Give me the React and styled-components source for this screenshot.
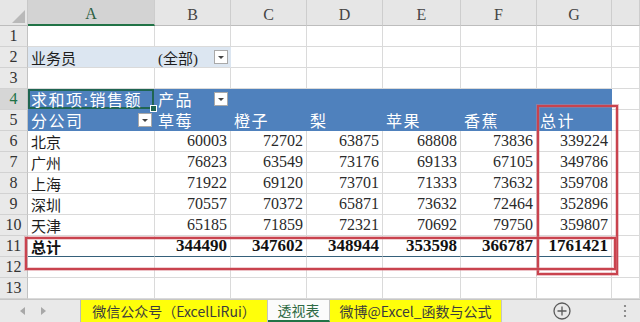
import React from 'react'
import styled, { createGlobalStyle, css } from 'styled-components'

const Global = createGlobalStyle`
  html, body { margin: 0; padding: 0; background: #fff; }
  body { width: 640px; height: 322px; overflow: hidden; }
`

const BLUE = '#4f81bd'
const GRID = '#dadada'

const Page = styled.div`
  width: 640px;
  height: 322px;
  display: flex;
  flex-direction: column;
  font-family: "Liberation Serif", "Noto Sans CJK SC", serif;
`

const Sheet = styled.div`
  position: relative;
  display: grid;
  grid-template-columns: 28px 127px 76px 76px 76px 78px 76px 75px 28px;
  grid-template-rows: 26px repeat(13, 21px);
`

const Corner = styled.div`
  background: #e6e6e6;
  border-right: 1px solid #c8c8c8;
  border-bottom: 1px solid #bdbdbd;
  box-sizing: border-box;
  display: flex;
  align-items: flex-end;
  justify-content: flex-end;
  padding: 0 2px 2px 0;
`

const ColHead = styled.div`
  box-sizing: border-box;
  background: ${p => (p.$active ? '#d3d3d3' : '#e6e6e6')};
  border-right: 1px solid #cdcdcd;
  border-bottom: ${p => (p.$active ? '2px solid #217346' : '1px solid #bdbdbd')};
  color: ${p => (p.$active ? '#2c5e3f' : '#444')};
  font-size: 16px;
  display: flex;
  align-items: center;
  justify-content: center;
  padding-top: 4px;
`

const RowHead = styled.div`
  box-sizing: border-box;
  background: ${p => (p.$active ? '#d6d6d6' : '#e9e9e9')};
  border-right: 1px solid #c2c2c2;
  border-bottom: 1px solid #d2d2d2;
  color: ${p => (p.$active ? '#217346' : '#333')};
  font-size: 16px;
  display: flex;
  align-items: center;
  justify-content: center;
`

const Cell = styled.div`
  position: relative;
  box-sizing: border-box;
  border-right: 1px solid ${GRID};
  border-bottom: 1px solid ${GRID};
  background: #fff;
  color: #1e1e1e;
  font-size: 15px;
  display: flex;
  align-items: center;
  justify-content: ${p => (p.$num ? 'flex-end' : 'space-between')};
  padding: 0 3px;
  white-space: nowrap;
  overflow: visible;

  ${p => p.$num && css`
    font-size: 16px;
    color: #2a2a2a;
  `}

  ${p => p.$fill === 'light' && css`
    background: #dce6f1;
    border-right-color: #dce6f1;
  `}

  ${p => p.$fill === 'blue' && css`
    background: ${BLUE};
    border-color: ${BLUE};
    color: #fff;
    font-size: 16px;
    letter-spacing: 1.5px;
  `}

  ${p => p.$bold && css`
    font-weight: bold;
    font-size: ${p.$num ? '17px' : '15px'};
    color: #111;
    border-bottom: 1px solid #35607a;
  `}

  ${p => p.$selected && css`
    box-shadow: inset 0 0 0 2px #1f6552;
    &::after {
      content: '';
      position: absolute;
      right: -3px;
      bottom: -3px;
      width: 5px;
      height: 5px;
      background: #1f6552;
      border: 1px solid #fff;
      z-index: 2;
    }
  `}
`

const DropBtn = styled.span`
  flex: none;
  width: 14px;
  height: 14px;
  box-sizing: border-box;
  background: #fff;
  border: 1px solid #a9a9a9;
  margin-right: -1px;
  display: flex;
  align-items: center;
  justify-content: center;

  &::before {
    content: '';
    border-left: 3px solid transparent;
    border-right: 3px solid transparent;
    border-top: 3px solid #444;
  }
`

const Mark = styled.div`
  position: absolute;
  left: ${p => p.$x}px;
  top: ${p => p.$y}px;
  width: ${p => p.$w}px;
  height: ${p => p.$h}px;
  box-sizing: border-box;
  border: 2px solid #c9434e;
  box-shadow: 0 0 0 1px rgba(214, 120, 130, 0.45), inset 0 0 0 1px rgba(214, 120, 130, 0.35);
  pointer-events: none;
  z-index: 3;
`

const TabBar = styled.div`
  flex: 1;
  display: flex;
  align-items: stretch;
  background: #e9e9e9;
  border-top: 1px solid #c6c6c6;
  font-family: "Noto Sans CJK SC", "Liberation Sans", sans-serif;
  font-size: 14px;
`

const Nav = styled.div`
  width: 81px;
  display: flex;
  align-items: center;
  gap: 16px;
  padding-left: 20px;
  box-sizing: border-box;
  border-right: 1px solid #b9b9b9;
`

const Tab = styled.div`
  display: flex;
  align-items: center;
  justify-content: center;
  width: ${p => p.$w}px;
  box-sizing: border-box;
  white-space: nowrap;
  color: ${p => (p.$active ? '#2e6a44' : '#3c3c3c')};
  background: ${p => (p.$active ? '#fbfbfb' : '#ffff0a')};
  border-right: 1px solid #c4c4c4;
  ${p => p.$active && css`
    border-bottom: 2px solid #217346;
  `}
`

const AddWrap = styled.div`
  width: 70px;
  display: flex;
  align-items: center;
  justify-content: flex-end;
  padding-right: 1px;
  box-sizing: border-box;
`

const More = styled.div`
  margin-left: auto;
  width: 30px;
  display: flex;
  align-items: center;
  justify-content: center;
`

const cols = ['A', 'B', 'C', 'D', 'E', 'F', 'G', '']

const rows = [
  ['北京', 60003, 72702, 63875, 68808, 73836, 339224],
  ['广州', 76823, 63549, 73176, 69133, 67105, 349786],
  ['上海', 71922, 69120, 73701, 71333, 73632, 359708],
  ['深圳', 70557, 70372, 65871, 73632, 72464, 352896],
  ['天津', 65185, 71859, 72321, 70692, 79750, 359807],
]
const total = ['总计', 344490, 347602, 348944, 353598, 366787, 1761421]
const fruits = ['草莓', '橙子', '梨', '苹果', '香蕉', '总计']

const Blank = ({ n }) => Array.from({ length: n }, (_, i) => <Cell key={i} />)

const Arrow = ({ dir }) => (
  <svg width="5" height="8" viewBox="0 0 5 8">
    <polygon points={dir === 'l' ? '5,0 5,8 0,4' : '0,0 0,8 5,4'} fill="#a8a8a8" />
  </svg>
)

export default function App() {
  return (
    <Page>
      <Global />
      <Sheet>
        <Corner>
          <svg width="13" height="13" viewBox="0 0 13 13">
            <polygon points="13,0 13,13 0,13" fill="#b9b9b9" />
          </svg>
        </Corner>
        {cols.map((c, i) => (
          <ColHead key={i} $active={c === 'A'}>{c}</ColHead>
        ))}

        <RowHead>1</RowHead>
        <Blank n={8} />

        <RowHead>2</RowHead>
        <Cell $fill="light">业务员</Cell>
        <Cell $fill="light">(全部)<DropBtn /></Cell>
        <Blank n={6} />

        <RowHead>3</RowHead>
        <Blank n={8} />

        <RowHead $active>4</RowHead>
        <Cell $fill="blue" $selected>求和项:销售额</Cell>
        <Cell $fill="blue">产品<DropBtn /></Cell>
        {[0, 1, 2, 3, 4].map(i => <Cell key={i} $fill="blue" />)}
        <Cell />

        <RowHead>5</RowHead>
        <Cell $fill="blue">分公司<DropBtn /></Cell>
        {fruits.map(f => <Cell key={f} $fill="blue">{f}</Cell>)}
        <Cell />

        {rows.map((r, ri) => (
          <React.Fragment key={r[0]}>
            <RowHead>{ri + 6}</RowHead>
            <Cell>{r[0]}</Cell>
            {r.slice(1).map((v, i) => <Cell key={i} $num>{v}</Cell>)}
            <Cell />
          </React.Fragment>
        ))}

        <RowHead>11</RowHead>
        <Cell $bold>{total[0]}</Cell>
        {total.slice(1).map((v, i) => <Cell key={i} $num $bold>{v}</Cell>)}
        <Cell />

        <RowHead>12</RowHead>
        <Blank n={8} />
        <RowHead>13</RowHead>
        <Blank n={8} />

        <Mark $x={537} $y={105} $w={81} $h={170} />
        <Mark $x={25} $y={237} $w={591} $h={33} />
      </Sheet>

      <TabBar>
        <Nav>
          <Arrow dir="l" />
          <Arrow dir="r" />
        </Nav>
        <Tab $w={187}>微信公众号（ExcelLiRui）</Tab>
        <Tab $w={62} $active>透视表</Tab>
        <Tab $w={172}>微博@Excel_函数与公式</Tab>
        <AddWrap>
          <svg width="18" height="18" viewBox="0 0 18 18">
            <circle cx="9" cy="9" r="8" fill="none" stroke="#5a5a5a" strokeWidth="1.3" />
            <path d="M9 4.5v9M4.5 9h9" stroke="#5a5a5a" strokeWidth="1.3" />
          </svg>
        </AddWrap>
        <More>
          <svg width="4" height="14" viewBox="0 0 4 14">
            <circle cx="2" cy="2" r="1.1" fill="#777" />
            <circle cx="2" cy="7" r="1.1" fill="#777" />
            <circle cx="2" cy="12" r="1.1" fill="#777" />
          </svg>
        </More>
      </TabBar>
    </Page>
  )
}
